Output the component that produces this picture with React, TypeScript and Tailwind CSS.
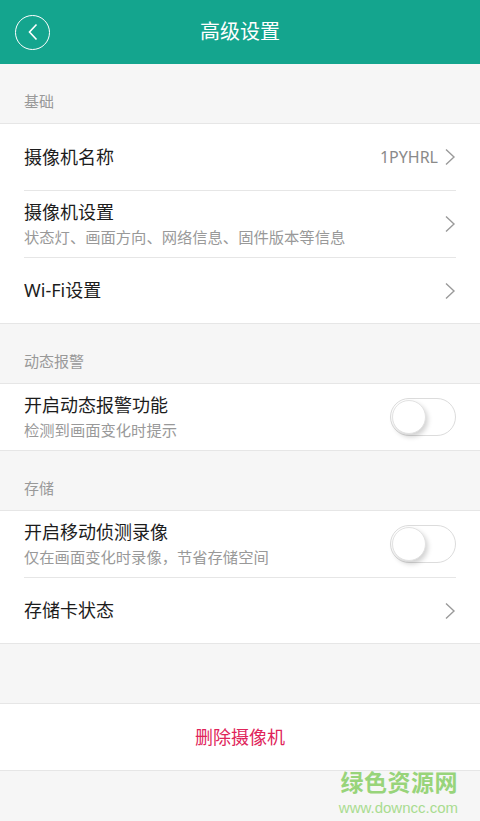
import React, { useState } from "react";

const Chevron = () => (
  <svg width="12" height="18" viewBox="0 0 12 18" fill="none" className="shrink-0">
    <polyline points="2,1.5 10,9 2,16.5" stroke="#9a9a9a" strokeWidth="1.4" strokeLinejoin="miter" />
  </svg>
);

const Toggle = ({ on, onClick }: { on: boolean; onClick: () => void }) => (
  <button
    onClick={onClick}
    className={`relative w-[66px] h-[38px] rounded-full border border-[#dcdcdc] shrink-0 ${on ? "bg-[#14a58e]" : "bg-white"}`}
  >
    <span
      className={`absolute top-[1px] w-[34px] h-[34px] rounded-full bg-white border border-[#e2e2e2] shadow-[2px_3px_5px_rgba(0,0,0,0.18)] ${on ? "left-[29px]" : "left-[1px]"}`}
    />
  </button>
);

const SectionTitle = ({ text }: { text: string }) => (
  <div className="h-[59px] flex items-end px-6 pb-[11px] text-[15px] text-[#999]">{text}</div>
);

const Divider = () => <div className="mx-6 h-px bg-[#e6e6e6]" />;

const App = () => {
  const [alarm, setAlarm] = useState(false);
  const [record, setRecord] = useState(false);

  return (
    <div
      className="w-[480px] min-h-[821px] bg-[#f6f6f6] flex flex-col"
      style={{ fontFamily: '"Noto Sans", "Noto Sans CJK SC", sans-serif' }}
    >
      {/* Header */}
      <div className="h-16 bg-[#14a58e] flex items-center relative">
        <button className="ml-[15px] w-[35px] h-[35px] rounded-full border-[1.5px] border-white flex items-center justify-center">
          <svg width="12" height="18" viewBox="0 0 12 18" fill="none">
            <polyline points="9.5,1.5 2.5,9 9.5,16.5" stroke="white" strokeWidth="1.6" />
          </svg>
        </button>
        <div className="absolute inset-0 flex items-center justify-center text-white text-[20px] pointer-events-none">
          高级设置
        </div>
      </div>

      {/* 基础 */}
      <SectionTitle text="基础" />
      <div className="bg-white border-y border-[#e6e6e6]">
        <div className="h-[66px] flex items-center justify-between px-6">
          <span className="text-[18px] text-[#1c1c1c]">摄像机名称</span>
          <div className="flex items-center gap-[6px]">
            <span className="text-[16px] text-[#8a8a8a]">1PYHRL</span>
            <Chevron />
          </div>
        </div>
        <Divider />
        <div className="h-[66px] flex items-center justify-between px-6">
          <div className="flex flex-col">
            <span className="text-[18px] leading-[24px] text-[#1c1c1c]">摄像机设置</span>
            <span className="text-[15.3px] leading-[22px] text-[#999] mt-[2px]">状态灯、画面方向、网络信息、固件版本等信息</span>
          </div>
          <Chevron />
        </div>
        <Divider />
        <div className="h-[65px] flex items-center justify-between px-6">
          <span className="text-[18px] text-[#1c1c1c]">Wi-Fi设置</span>
          <Chevron />
        </div>
      </div>

      {/* 动态报警 */}
      <SectionTitle text="动态报警" />
      <div className="bg-white border-y border-[#e6e6e6]">
        <div className="h-[66px] flex items-center justify-between px-6">
          <div className="flex flex-col">
            <span className="text-[18px] leading-[24px] text-[#1c1c1c]">开启动态报警功能</span>
            <span className="text-[15.3px] leading-[22px] text-[#999] mt-[2px]">检测到画面变化时提示</span>
          </div>
          <Toggle on={alarm} onClick={() => setAlarm(!alarm)} />
        </div>
      </div>

      {/* 存储 */}
      <SectionTitle text="存储" />
      <div className="bg-white border-y border-[#e6e6e6]">
        <div className="h-[66px] flex items-center justify-between px-6">
          <div className="flex flex-col">
            <span className="text-[18px] leading-[24px] text-[#1c1c1c]">开启移动侦测录像</span>
            <span className="text-[15.3px] leading-[22px] text-[#999] mt-[2px]">仅在画面变化时录像，节省存储空间</span>
          </div>
          <Toggle on={record} onClick={() => setRecord(!record)} />
        </div>
        <Divider />
        <div className="h-[65px] flex items-center justify-between px-6">
          <span className="text-[18px] text-[#1c1c1c]">存储卡状态</span>
          <Chevron />
        </div>
      </div>

      <div className="h-[59px]" />

      {/* 删除 */}
      <div className="bg-white border-y border-[#e6e6e6] h-[68px] flex items-center justify-center">
        <span className="text-[18px] text-[#e0245a]">删除摄像机</span>
      </div>

      {/* watermark */}
      <div className="flex-1 flex flex-col items-end pr-[22px]">
        <span className="text-[23px] leading-[23px] font-bold text-[#98d47a] tracking-[0.5px]">绿色资源网</span>
        <span
          className="mt-[6px] text-[15px] leading-[15px] text-[#a9dc90]"
          style={{ fontFamily: '"Liberation Sans", sans-serif' }}
        >
          www.downcc.com
        </span>
      </div>
    </div>
  );
};

export default App;
